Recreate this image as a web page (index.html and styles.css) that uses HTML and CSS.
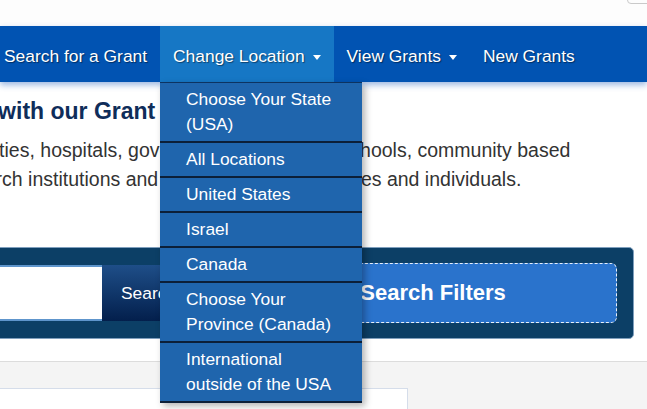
FILE: index.html
```html
<!DOCTYPE html>
<html lang="en">
<head>
<meta charset="utf-8">
<title>Grant Finder</title>
<link rel="stylesheet" href="styles.css">
</head>
<body>

<header class="topbar">
  <div class="top-tab"></div>
</header>

<nav class="mainnav">
  <ul class="nav-list">
    <li class="nav-item"><a href="#">Search for a Grant</a></li>
    <li class="nav-item active">
      <a href="#">Change Location <span class="caret"></span></a>
      <ul class="dropdown-menu">
        <li><a href="#">Choose Your State (USA)</a></li>
        <li><a href="#">All Locations</a></li>
        <li><a href="#">United States</a></li>
        <li><a href="#">Israel</a></li>
        <li><a href="#">Canada</a></li>
        <li><a href="#">Choose Your Province (Canada)</a></li>
        <li><a href="#">International outside of the USA</a></li>
      </ul>
    </li>
    <li class="nav-item"><a href="#">View Grants <span class="caret"></span></a></li>
    <li class="nav-item"><a href="#">New Grants</a></li>
  </ul>
</nav>

<main>
  <section class="intro">
    <h1 class="intro-title">Search with our Grant Finder</h1>
    <p class="intro-text">colleges and universities, hospitals, governmental agencies, schools, community based<br>organizations, research institutions and all other nonprofit entities and individuals.</p>
  </section>

  <div class="search-band">
    <input type="text" class="search-input">
    <button type="button" class="search-btn">Search</button>
    <button type="button" class="filters-btn">Search Filters</button>
  </div>

  <section class="results">
    <div class="results-box"></div>
  </section>
</main>

</body>
</html>
```

FILE: styles.css
```css
body {
  margin: 0;
  font-family: "Liberation Sans", Arial, sans-serif;
  background-color: #fff;
  overflow: hidden;
}

.topbar {
  height: 26px;
  display: flex;
  justify-content: flex-end;
  background-color: #fdfdfd;
}

.top-tab {
  width: 22px;
  height: 8px;
  margin-top: -6px;
  margin-right: -4px;
  border: 1px solid #cacaca;
  border-radius: 4px;
}

.mainnav {
  position: relative;
  z-index: 2;
  height: 56px;
  background-color: #0153b2;
  box-shadow: 0 3px 6px rgba(40, 100, 190, 0.45);
}

.nav-list {
  display: flex;
  list-style: none;
  margin: 0 0 0 -9px;
  padding: 0;
  height: 100%;
}

.nav-item {
  position: relative;
}

.nav-item > a {
  display: flex;
  align-items: center;
  height: 52px;
  padding: 4px 13px 0;
  color: #fff;
  text-decoration: none;
  font-size: 17.4px;
  text-shadow: 1px 1px 1px rgba(0, 0, 0, 0.45);
}

.nav-item.active > a {
  background-color: #1677c5;
}

.caret {
  width: 0;
  height: 0;
  margin-left: 8px;
  margin-top: 2px;
  border-top: 5px solid #fff;
  border-left: 4.5px solid transparent;
  border-right: 4.5px solid transparent;
}

.dropdown-menu {
  position: absolute;
  top: 100%;
  left: 0;
  width: 202px;
  margin: 0;
  padding: 0;
  list-style: none;
  background-color: #1f65ad;
  border-top: 1px solid #0d3360;
  box-shadow: 3px 3px 7px rgba(0, 0, 0, 0.3);
}

.dropdown-menu a {
  display: block;
  padding: 4px 26px;
  line-height: 25px;
  color: #fff;
  text-decoration: none;
  font-size: 17.4px;
  border-bottom: 2px solid #0c1f38;
}

.intro-title {
  margin: 15px 0 0 -85px;
  font-size: 23px;
  line-height: 28px;
  color: #0f2d5a;
  white-space: nowrap;
}

.intro-text {
  margin: 11px 0 0 -180px;
  text-indent: -3px;
  font-size: 19.5px;
  line-height: 29px;
  color: #333;
  white-space: nowrap;
}

.search-band {
  display: flex;
  align-items: center;
  box-sizing: border-box;
  height: 92px;
  margin: 53px 13px 0 -200px;
  padding-right: 16px;
  background-color: #0c3f66;
  border: 1px solid #7f9fbd;
  border-radius: 5px;
}

.search-input {
  flex: 1;
  box-sizing: border-box;
  height: 56px;
  border: none;
  border-top: 2px solid #5e95cc;
  border-bottom: 2px solid #5e95cc;
  background-color: #fff;
}

.search-btn {
  width: 115px;
  height: 56px;
  padding: 0 0 0 19px;
  border: none;
  background: linear-gradient(#1e4e88, #031f4c);
  color: #fff;
  font-family: inherit;
  font-size: 17.4px;
  text-align: left;
}

.filters-btn {
  width: 368px;
  height: 60px;
  margin-left: 32px;
  border: 1px dashed #e8f0fa;
  border-radius: 6px;
  background-color: #2a73cc;
  color: #fff;
  font-family: inherit;
  font-size: 22px;
  font-weight: bold;
}

.results {
  height: 100px;
  margin-top: 22px;
  padding-top: 26px;
  box-sizing: border-box;
  border-top: 1px solid #dcdcdc;
  background-color: #f4f4f4;
}

.results-box {
  width: 416px;
  height: 60px;
  margin-left: -10px;
  border: 1px solid #d5ddea;
  background-color: #fff;
}
```
